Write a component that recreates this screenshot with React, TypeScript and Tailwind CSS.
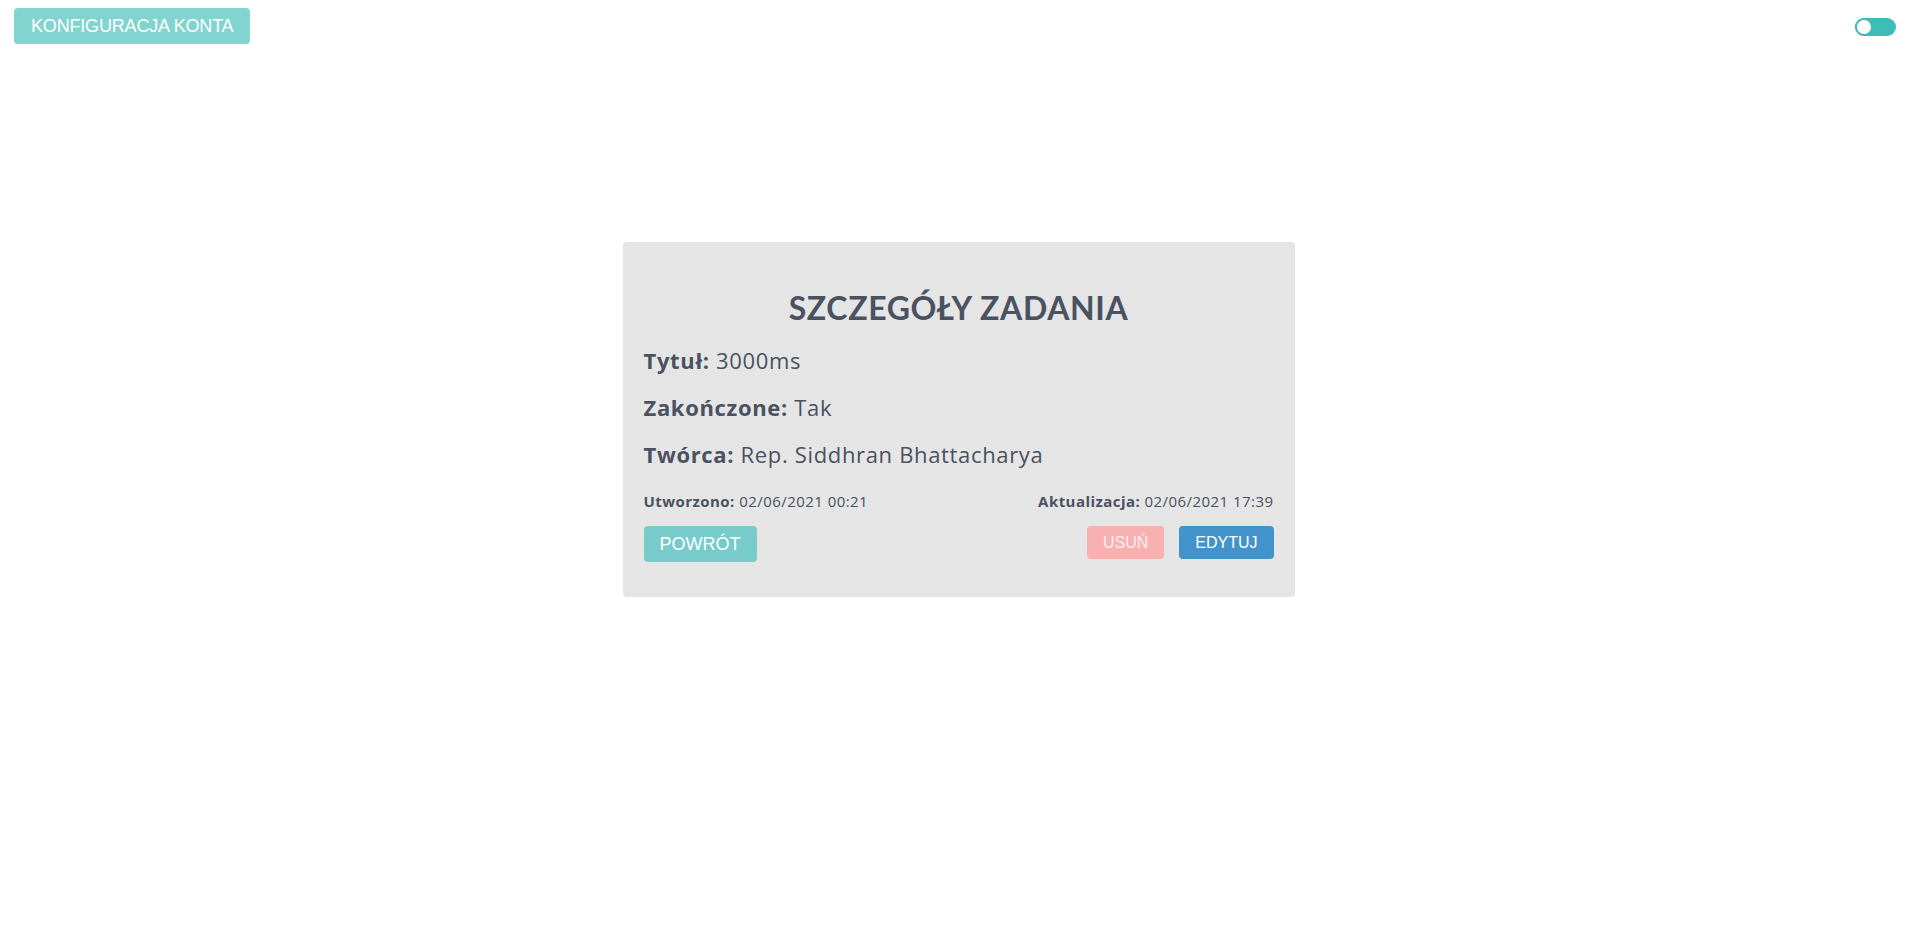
import { useState } from 'react'

function Toggle() {
    const [on, setOn] = useState(false)
    return (
        <button
            onClick={() => setOn(!on)}
            className="relative w-[41px] h-[18px] rounded-full bg-[#3dbdb7] mt-[10px]"
        >
            <span
                className={
                    on
                        ? "absolute top-[1px] left-[24px] w-[16px] h-[16px] rounded-full bg-white"
                        : "absolute top-[0px] left-[0px] w-[18px] h-[18px] rounded-full bg-white border-2 border-[#3dbdb7]"
                }
            />
        </button>
    )
}

function Row({ label, value }: { label: string; value: string }) {
    return (
        <p className="text-[22px] leading-[28px] tracking-[0.03em] font-['Open_Sans',sans-serif]">
            <span className="font-bold">{label}</span> {value}
        </p>
    )
}

export default function App() {
    return (
        <div className="min-h-screen bg-white font-['Lato','Noto_Sans',sans-serif] text-[#4a5160]">
            <header className="flex justify-between items-start pl-[14px] pr-[18px] pt-[8px]">
                <button className="h-[36px] px-[17px] rounded-[4px] bg-[#81d4d0] text-white text-[18px] tracking-[-0.01em] font-['Liberation_Sans',Arial,sans-serif]">
                    KONFIGURACJA KONTA
                </button>
                <Toggle />
            </header>

            <main className="flex justify-center pt-[198px]">
                <section className="w-[672px] ml-[3px] bg-[#e5e5e5] rounded-[4px] px-[21px] pt-[46px] pb-[35px]">
                    <h1 className="text-center text-[32px] leading-[40px] font-bold tracking-[0.02em]">SZCZEGÓŁY ZADANIA</h1>

                    <div className="flex flex-col gap-[19px] mt-[18px]">
                        <Row label="Tytuł:" value="3000ms" />
                        <Row label="Zakończone:" value="Tak" />
                        <Row label="Twórca:" value="Rep. Siddhran Bhattacharya" />
                    </div>

                    <div className="flex justify-between text-[15px] leading-[20px] tracking-[0.03em] mt-[23px] font-['Open_Sans',sans-serif]">
                        <p><span className="font-bold">Utworzono:</span> 02/06/2021 00:21</p>
                        <p><span className="font-bold">Aktualizacja:</span> 02/06/2021 17:39</p>
                    </div>

                    <div className="flex justify-between items-start mt-[15px] font-['Liberation_Sans',Arial,sans-serif] text-white">
                        <button className="h-[36px] px-[16px] rounded-[4px] bg-[#77cbca] text-[18px]">POWRÓT</button>
                        <div className="flex gap-[15px]">
                            <button className="h-[33px] px-[16px] rounded-[4px] bg-[#f8b0b0] text-[16px] text-[#fdeeee]">USUŃ</button>
                            <button className="h-[33px] px-[16px] rounded-[4px] bg-[#4393cb] text-[16px]">EDYTUJ</button>
                        </div>
                    </div>
                </section>
            </main>
        </div>
    )
}
